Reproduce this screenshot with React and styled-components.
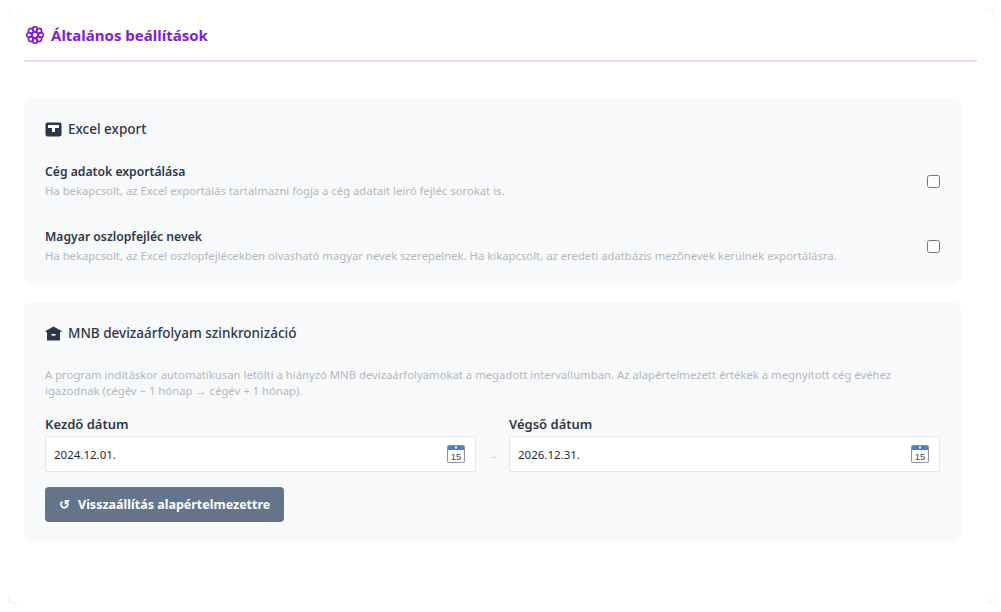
import React from "react";
import styled, { createGlobalStyle } from "styled-components";

const Global = createGlobalStyle`
  html, body { margin: 0; padding: 0; background: #ffffff; }
  body { margin: 8px; font-family: "Noto Sans", "Open Sans", sans-serif; color: #2d3748; }
  * { box-sizing: border-box; }
`;

const Card = styled.div`
  height: calc(100vh - 16px);
  background: #ffffff;
  border-radius: 10px;
  box-shadow: 0 1px 6px rgba(0, 0, 0, 0.08), 0 0 1px rgba(0, 0, 0, 0.06);
  padding: 16px 16px 0 16px;
  display: flex;
  flex-direction: column;
`;

const Header = styled.div`
  display: flex;
  align-items: center;
  gap: 7px;
  padding: 0 2px 14px 2px;
  border-bottom: 2px solid #e9d5ff;
  margin-bottom: 36px;
`;

const Title = styled.h1`
  margin: 0;
  font-size: 15px;
  line-height: 22px;
  font-weight: 700;
  color: #7e22ce;
`;

const Content = styled.div`
  padding-right: 16px;
  display: flex;
  flex-direction: column;
  gap: 18px;
`;

const Panel = styled.section`
  background: #f8f9fb;
  border-radius: 8px;
  padding: 21px 21px ${(p) => p.$pb || 20}px 21px;
`;

const PanelHead = styled.h2`
  margin: 0 0 24px 0;
  display: flex;
  align-items: center;
  gap: 6px;
  font-size: 13.5px;
  line-height: 20px;
  font-weight: 500;
  color: #2d3748;
`;

const Rows = styled.div`
  display: flex;
  flex-direction: column;
  gap: 29px;
`;

const Row = styled.div`
  display: flex;
  align-items: center;
  justify-content: space-between;
  gap: 20px;
`;

const RowText = styled.div`
  display: flex;
  flex-direction: column;
  gap: 2px;
`;

const Label = styled.div`
  font-size: 12.2px;
  line-height: 18px;
  font-weight: 600;
  color: #2d3748;
`;

const Desc = styled.div`
  font-size: 11.3px;
  line-height: 16px;
  color: #b3b8bf;
`;

const Check = styled.input`
  width: 13px;
  height: 13px;
  margin: 0;
  flex: none;
`;

const Note = styled(Desc)`
  margin-bottom: 16px;
`;

const DateGrid = styled.div`
  display: grid;
  grid-template-columns: 1fr 33px 1fr;
  align-items: end;
`;

const Field = styled.div`
  display: flex;
  flex-direction: column;
  gap: 3px;
`;

const FieldLabel = styled.label`
  font-size: 13px;
  line-height: 18px;
  font-weight: 600;
  color: #2d3748;
`;

const InputBox = styled.div`
  height: 36px;
  background: #ffffff;
  border: 1px solid #e5e7eb;
  display: flex;
  align-items: center;
  justify-content: space-between;
  padding: 0 9px 0 8px;
  font-size: 11.5px;
  color: #1f2937;
`;

const Arrow = styled.span`
  height: 36px;
  display: flex;
  align-items: center;
  justify-content: center;
  color: #cbd5e1;
  font-size: 12px;
`;

const Button = styled.button`
  margin-top: 15px;
  height: 35px;
  padding: 0 14px 0 14px;
  background: #64748b;
  color: #ffffff;
  border: none;
  border-radius: 4px;
  font-family: inherit;
  font-size: 12.5px;
  font-weight: 700;
  display: inline-flex;
  align-items: center;
  gap: 8px;
`;

const GearIcon = () => (
  <svg width="18" height="18" viewBox="0 0 18 18">
    {Array.from({ length: 8 }).map((_, i) => {
      const a = (i * Math.PI) / 4;
      return (
        <circle
          key={i}
          cx={9 + Math.cos(a) * 5.8}
          cy={9 + Math.sin(a) * 5.8}
          r="2.5"
          fill="none"
          stroke="#7e22ce"
          strokeWidth="1.7"
        />
      );
    })}
    <circle cx="9" cy="9" r="3" fill="none" stroke="#7e22ce" strokeWidth="1.7" />
  </svg>
);

const BoxIcon = () => (
  <svg width="17" height="15" viewBox="0 0 17 15">
    <rect x="0.5" y="0.5" width="16" height="14" rx="2" fill="#2d3748" />
    <rect x="3" y="3" width="11" height="3" fill="#ffffff" />
    <rect x="7" y="5" width="3" height="5" fill="#ffffff" />
  </svg>
);

const BankIcon = () => (
  <svg width="17" height="15" viewBox="0 0 17 15">
    <path d="M8.5 0.5 L16.5 5 L16.5 6 L0.5 6 L0.5 5 Z" fill="#2d3748" />
    <rect x="2" y="6" width="13" height="8.5" fill="#2d3748" />
    <rect x="6.5" y="8" width="4" height="1.6" fill="#ffffff" />
  </svg>
);

const CalendarIcon = () => (
  <svg width="20" height="20" viewBox="0 0 20 20">
    <rect x="1.5" y="1.5" width="17" height="17" rx="1" fill="#fdfdfd" stroke="#8a96a3" />
    <rect x="2" y="2" width="16" height="4" fill="#4f7fb8" />
    <rect x="9" y="2.5" width="2" height="2" fill="#ffffff" />
    <text x="10" y="16" fontSize="9.5" fontFamily="Liberation Sans, sans-serif" fill="#44505c" textAnchor="middle">15</text>
  </svg>
);

const DateInput = ({ label, value }) => (
  <Field>
    <FieldLabel>{label}</FieldLabel>
    <InputBox>
      <span>{value}</span>
      <CalendarIcon />
    </InputBox>
  </Field>
);

export default function App() {
  return (
    <>
      <Global />
      <Card>
        <Header>
          <GearIcon />
          <Title>Általános beállítások</Title>
        </Header>
        <Content>
          <Panel>
            <PanelHead>
              <BoxIcon />
              Excel export
            </PanelHead>
            <Rows>
              <Row>
                <RowText>
                  <Label>Cég adatok exportálása</Label>
                  <Desc>Ha bekapcsolt, az Excel exportálás tartalmazni fogja a cég adatait leíró fejléc sorokat is.</Desc>
                </RowText>
                <Check type="checkbox" />
              </Row>
              <Row>
                <RowText>
                  <Label>Magyar oszlopfejléc nevek</Label>
                  <Desc>Ha bekapcsolt, az Excel oszlopfejlécekben olvasható magyar nevek szerepelnek. Ha kikapcsolt, az eredeti adatbázis mezőnevek kerülnek exportálásra.</Desc>
                </RowText>
                <Check type="checkbox" />
              </Row>
            </Rows>
          </Panel>
          <Panel $pb={21}>
            <PanelHead>
              <BankIcon />
              MNB devizaárfolyam szinkronizáció
            </PanelHead>
            <Note>
              A program indításkor automatikusan letölti a hiányzó MNB devizaárfolyamokat a megadott intervallumban. Az alapértelmezett értékek a megnyitott cég évéhez igazodnak (cégév − 1 hónap → cégév + 1 hónap).
            </Note>
            <DateGrid>
              <DateInput label="Kezdő dátum" value="2024.12.01." />
              <Arrow>→</Arrow>
              <DateInput label="Végső dátum" value="2026.12.31." />
            </DateGrid>
            <Button type="button">
              <span>↺</span>
              Visszaállítás alapértelmezettre
            </Button>
          </Panel>
        </Content>
      </Card>
    </>
  );
}
